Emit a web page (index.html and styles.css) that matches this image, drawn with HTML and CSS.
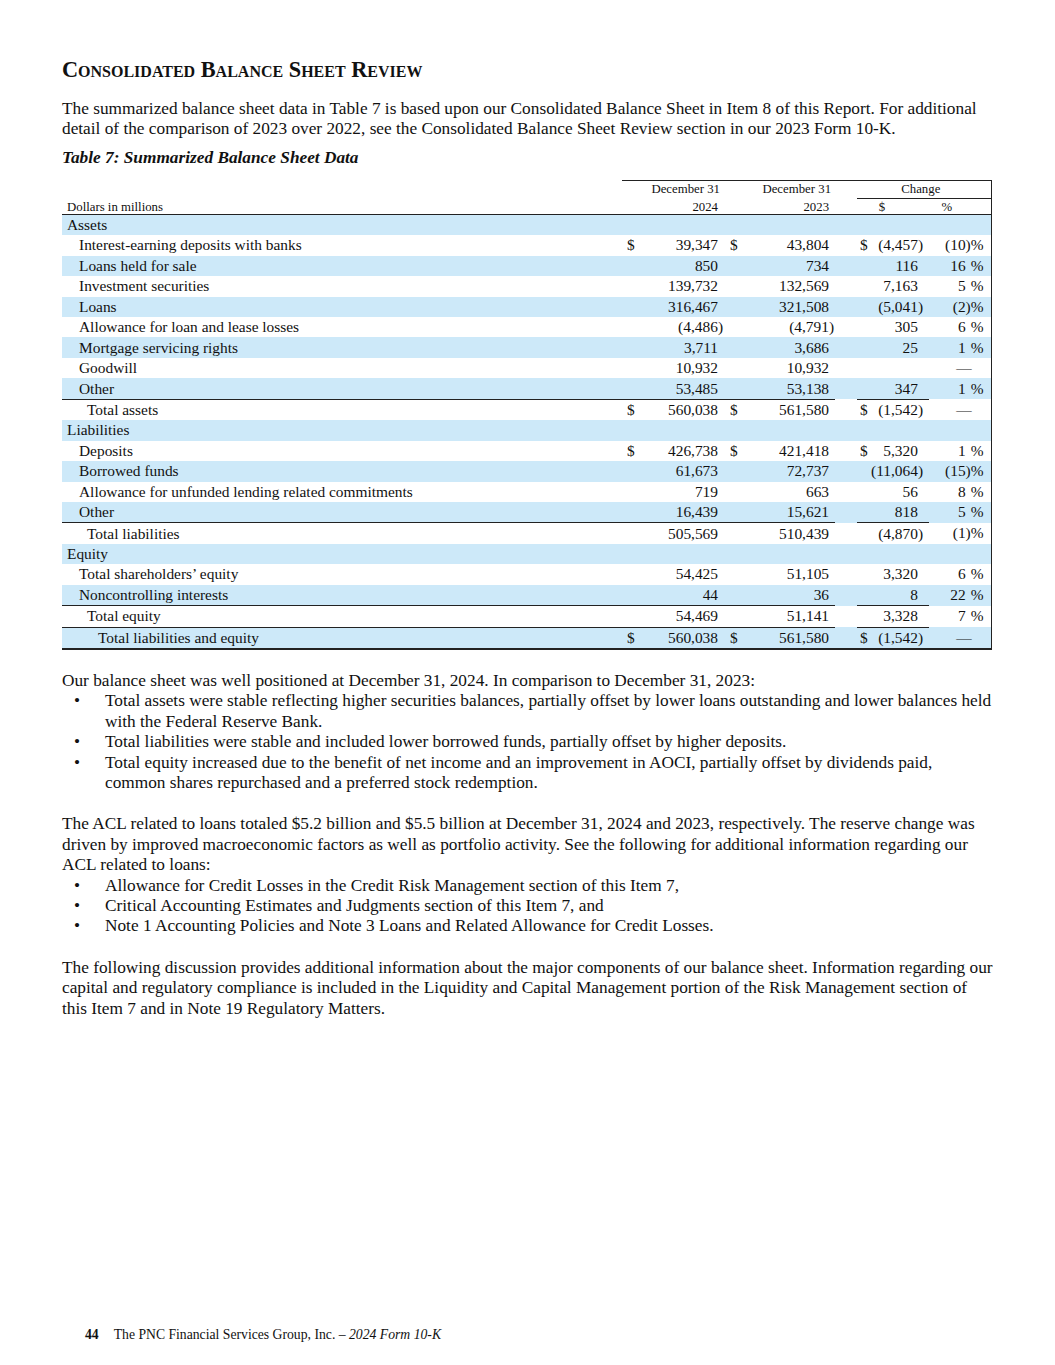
FILE: index.html
```html
<!DOCTYPE html>
<html>
<head>
<meta charset="utf-8">
<link rel="stylesheet" href="styles.css">
</head>
<body>
<div class="page">
  <h1 class="title">Consolidated Balance Sheet Review</h1>
  <p class="para">The summarized balance sheet data in Table 7 is based upon our Consolidated Balance Sheet in Item 8 of this Report. For additional detail of the comparison of 2023 over 2022, see the Consolidated Balance Sheet Review section in our 2023 Form 10-K.</p>
  <p class="caption">Table 7: Summarized Balance Sheet Data</p>

  <table class="bs">
    <colgroup>
      <col class="c-label"><col class="c-d"><col class="c-v1"><col class="c-d2"><col class="c-v2"><col class="c-gap"><col class="c-d3"><col class="c-v3"><col class="c-pct">
    </colgroup>
    <thead>
      <tr class="h1">
        <th class="lbl"></th>
        <th colspan="2" class="top hd-date">December 31</th>
        <th colspan="2" class="top hd-date">December 31</th>
        <th class="top"></th>
        <th colspan="3" class="top chg">Change</th>
      </tr>
      <tr class="h2">
        <th class="lbl hd-dim">Dollars in millions</th>
        <th colspan="2" class="hd-year">2024</th>
        <th colspan="2" class="hd-year">2023</th>
        <th></th>
        <th colspan="2" class="hd-cd">$</th>
        <th class="hd-pct rb">%</th>
      </tr>
    </thead>
    <tbody>
      <tr class="blue"><td class="lbl sec">Assets</td><td></td><td></td><td></td><td></td><td></td><td></td><td></td><td class="rb"></td></tr>
      <tr><td class="lbl l1">Interest-earning deposits with banks</td><td class="d">$</td><td class="v">39,347</td><td class="d d2">$</td><td class="v">43,804</td><td></td><td class="d d3">$</td><td class="v c">(4,457)</td><td class="p rb">(10)%</td></tr>
      <tr class="blue"><td class="lbl l1">Loans held for sale</td><td></td><td class="v">850</td><td></td><td class="v">734</td><td></td><td></td><td class="v c">116<span class="hid">)</span></td><td class="p rb">16<span class="hid">)</span>%</td></tr>
      <tr><td class="lbl l1">Investment securities</td><td></td><td class="v">139,732</td><td></td><td class="v">132,569</td><td></td><td></td><td class="v c">7,163<span class="hid">)</span></td><td class="p rb">5<span class="hid">)</span>%</td></tr>
      <tr class="blue"><td class="lbl l1">Loans</td><td></td><td class="v">316,467</td><td></td><td class="v">321,508</td><td></td><td></td><td class="v c">(5,041)</td><td class="p rb">(2)%</td></tr>
      <tr><td class="lbl l1">Allowance for loan and lease losses</td><td></td><td class="v">(4,486<span class="rp">)</span></td><td></td><td class="v">(4,791<span class="rp">)</span></td><td></td><td></td><td class="v c">305<span class="hid">)</span></td><td class="p rb">6<span class="hid">)</span>%</td></tr>
      <tr class="blue"><td class="lbl l1">Mortgage servicing rights</td><td></td><td class="v">3,711</td><td></td><td class="v">3,686</td><td></td><td></td><td class="v c">25<span class="hid">)</span></td><td class="p rb">1<span class="hid">)</span>%</td></tr>
      <tr><td class="lbl l1">Goodwill</td><td></td><td class="v">10,932</td><td></td><td class="v">10,932</td><td></td><td></td><td class="v c"></td><td class="dash rb">—</td></tr>
      <tr class="blue ul"><td class="lbl l1">Other</td><td></td><td class="v">53,485</td><td></td><td class="v">53,138</td><td class="nb"></td><td></td><td class="v c">347<span class="hid">)</span></td><td class="p rb nb">1<span class="hid">)</span>%</td></tr>
      <tr><td class="lbl l2">Total assets</td><td class="d">$</td><td class="v">560,038</td><td class="d d2">$</td><td class="v">561,580</td><td></td><td class="d d3">$</td><td class="v c">(1,542)</td><td class="dash rb">—</td></tr>
      <tr class="blue"><td class="lbl sec">Liabilities</td><td></td><td></td><td></td><td></td><td></td><td></td><td></td><td class="rb"></td></tr>
      <tr><td class="lbl l1">Deposits</td><td class="d">$</td><td class="v">426,738</td><td class="d d2">$</td><td class="v">421,418</td><td></td><td class="d d3">$</td><td class="v c">5,320<span class="hid">)</span></td><td class="p rb">1<span class="hid">)</span>%</td></tr>
      <tr class="blue"><td class="lbl l1">Borrowed funds</td><td></td><td class="v">61,673</td><td></td><td class="v">72,737</td><td></td><td></td><td class="v c">(11,064)</td><td class="p rb">(15)%</td></tr>
      <tr><td class="lbl l1">Allowance for unfunded lending related commitments</td><td></td><td class="v">719</td><td></td><td class="v">663</td><td></td><td></td><td class="v c">56<span class="hid">)</span></td><td class="p rb">8<span class="hid">)</span>%</td></tr>
      <tr class="blue ul"><td class="lbl l1">Other</td><td></td><td class="v">16,439</td><td></td><td class="v">15,621</td><td class="nb"></td><td></td><td class="v c">818<span class="hid">)</span></td><td class="p rb nb">5<span class="hid">)</span>%</td></tr>
      <tr><td class="lbl l2">Total liabilities</td><td></td><td class="v">505,569</td><td></td><td class="v">510,439</td><td></td><td></td><td class="v c">(4,870)</td><td class="p rb">(1)%</td></tr>
      <tr class="blue"><td class="lbl sec">Equity</td><td></td><td></td><td></td><td></td><td></td><td></td><td></td><td class="rb"></td></tr>
      <tr><td class="lbl l1">Total shareholders’ equity</td><td></td><td class="v">54,425</td><td></td><td class="v">51,105</td><td></td><td></td><td class="v c">3,320<span class="hid">)</span></td><td class="p rb">6<span class="hid">)</span>%</td></tr>
      <tr class="blue ul"><td class="lbl l1">Noncontrolling interests</td><td></td><td class="v">44</td><td></td><td class="v">36</td><td class="nb"></td><td></td><td class="v c">8<span class="hid">)</span></td><td class="p rb nb">22<span class="hid">)</span>%</td></tr>
      <tr class="ul"><td class="lbl l2">Total equity</td><td></td><td class="v">54,469</td><td></td><td class="v">51,141</td><td class="nb"></td><td></td><td class="v c">3,328<span class="hid">)</span></td><td class="p rb nb">7<span class="hid">)</span>%</td></tr>
      <tr class="blue last"><td class="lbl l3">Total liabilities and equity</td><td class="d">$</td><td class="v">560,038</td><td class="d d2">$</td><td class="v">561,580</td><td></td><td class="d d3">$</td><td class="v c">(1,542)</td><td class="dash rb">—</td></tr>
    </tbody>
  </table>

  <p class="para lead">Our balance sheet was well positioned at December 31, 2024. In comparison to December 31, 2023:</p>
  <ul class="bullets">
    <li><span class="bul">•</span><span>Total assets were stable reflecting higher securities balances, partially offset by lower loans outstanding and lower balances held with the Federal Reserve Bank.</span></li>
    <li><span class="bul">•</span><span>Total liabilities were stable and included lower borrowed funds, partially offset by higher deposits.</span></li>
    <li><span class="bul">•</span><span>Total equity increased due to the benefit of net income and an improvement in AOCI, partially offset by dividends paid, common shares repurchased and a preferred stock redemption.</span></li>
  </ul>

  <p class="para block">The ACL related to loans totaled $5.2 billion and $5.5 billion at December 31, 2024 and 2023, respectively. The reserve change was driven by improved macroeconomic factors as well as portfolio activity. See the following for additional information regarding our ACL related to loans:</p>
  <ul class="bullets">
    <li><span class="bul">•</span><span>Allowance for Credit Losses in the Credit Risk Management section of this Item 7,</span></li>
    <li><span class="bul">•</span><span>Critical Accounting Estimates and Judgments section of this Item 7, and</span></li>
    <li><span class="bul">•</span><span>Note 1 Accounting Policies and Note 3 Loans and Related Allowance for Credit Losses.</span></li>
  </ul>

  <p class="para block">The following discussion provides additional information about the major components of our balance sheet. Information regarding our capital and regulatory compliance is included in the Liquidity and Capital Management portion of the Risk Management section of this Item 7 and in Note 19 Regulatory Matters.</p>

  <footer class="footer"><span class="pgno">44</span><span>The PNC Financial Services Group, Inc. – <em>2024 Form 10-K</em></span></footer>
</div>
</body>
</html>
```

FILE: styles.css
```css
html, body {
  margin: 0;
  padding: 0;
  background: #fff;
}
body {
  font-family: "Liberation Serif", "Times New Roman", serif;
  color: #111;
}
.page {
  box-sizing: border-box;
  height: 1365px;
  padding: 57px 62px 0 62px;
  display: flex;
  flex-direction: column;
}
.title {
  margin: 0;
  font-size: 22.3px;
  font-weight: bold;
  font-variant: small-caps;
  line-height: 26px;
  letter-spacing: 0;
}
.para {
  margin: 0;
  font-size: 17.3px;
  line-height: 20.4px;
}
.title + .para {
  margin-top: 16px;
}
.caption {
  margin: 8px 0 0;
  font-size: 17.3px;
  font-weight: bold;
  font-style: italic;
  line-height: 20px;
}

/* table */
.bs {
  margin-top: 12px;
  width: 929px;
  border-collapse: collapse;
  table-layout: fixed;
  font-size: 15.4px;
}
.c-label { width: 560px; }
.c-d { width: 18px; }
.c-v1 { width: 84px; }
.c-d2 { width: 16px; }
.c-v2 { width: 95px; }
.c-gap { width: 22px; }
.c-d3 { width: 13px; }
.c-v3 { width: 59px; }
.c-pct { width: 62px; }

.bs th {
  font-weight: normal;
  font-size: 12.8px;
  padding: 0;
  white-space: nowrap;
}
.bs tr.h1 th { height: 17px; }
.bs tr.h2 th { height: 15px; border-bottom: 1.5px solid #222; vertical-align: bottom; line-height: 13px; }
.bs th.top { border-top: 1px solid #222; }
.bs th.chg { border-bottom: 1px solid #222; border-right: 1px solid #222; text-align: center; padding-right: 6px; }
.hd-date { text-align: right; padding-right: 4px !important; }
.hd-year { text-align: right; padding-right: 6px !important; }
.hd-dim { text-align: left; padding-left: 5px !important; }
.hd-cd { text-align: center; padding-right: 22px !important; }
.hd-pct { text-align: center; padding-right: 26px !important; }

.bs td {
  height: 20.45px;
  padding: 0;
  line-height: 16px;
  white-space: nowrap;
  vertical-align: middle;
}
.bs tr.blue td { background: #cde9f9; }
.bs .rb { border-right: 1px solid #222; }
.lbl { text-align: left; }
.sec { padding-left: 5px !important; }
.l1 { padding-left: 17px !important; }
.l2 { padding-left: 25px !important; }
.l3 { padding-left: 36px !important; }
.d { text-align: left; padding-left: 5px !important; }
.d2 { padding-left: 6px !important; }
.d3 { padding-left: 3px !important; }
.v { text-align: right; padding-right: 6px !important; }
.v.c { padding-right: 6px !important; }
.rp { margin-right: -5px; }
.p { text-align: right; padding-right: 7px !important; }
.dash { text-align: right; padding-right: 19px !important; }
.hid { visibility: hidden; }

.bs tr.ul td { border-bottom: 1px solid #222; }
.bs tr.ul td.nb { border-bottom: none; }
.bs tr.last td { border-bottom: 2px solid #222; }

/* text below table */
.lead { margin-top: 21px; }
.block { margin-top: 21px; }
.bullets {
  list-style: none;
  margin: 0;
  padding: 0;
  font-size: 17.3px;
  line-height: 20.4px;
}
.bullets li {
  display: flex;
}
.bul {
  flex: 0 0 31px;
  padding-left: 12px;
}

.footer {
  margin-top: auto;
  margin-bottom: 22px;
  margin-left: 23px;
  font-size: 13.7px;
  line-height: 16px;
  display: flex;
  gap: 15px;
}
.pgno { font-weight: bold; }
```
